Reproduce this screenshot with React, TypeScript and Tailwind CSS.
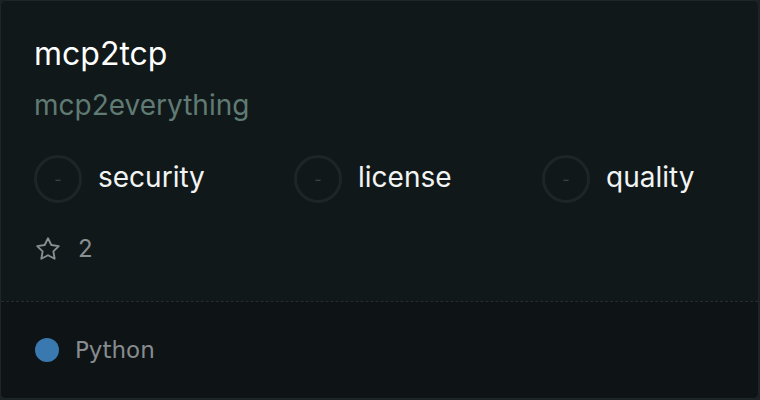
import React from 'react';

const SCORES = [
  { label: 'security', w: 'w-[260px]' },
  { label: 'license', w: 'w-[248px]' },
  { label: 'quality', w: 'w-auto' },
];

function ScoreCircle() {
  return (
    <div className="w-12 h-12 rounded-full border-[3px] border-[#1e2527] flex items-center justify-center text-[#3b4244] text-[16px] leading-none">
      -
    </div>
  );
}

export default function App() {
  return (
    <div className="w-[760px] h-[400px] bg-[#1c2325]">
      <div
        className="w-[759px] h-[399px] rounded-[6px] border border-[#1f2628] bg-[#111819] flex flex-col overflow-hidden"
        style={{ fontFamily: 'Inter, "Liberation Sans", sans-serif' }}
      >
        <div className="flex-1 pl-[33px] pt-[33px]">
          <h1 className="text-[32px] leading-[40px] text-white">mcp2tcp</h1>
          <p className="mt-[13px] text-[28px] leading-[36px] text-[#5f7b74]">mcp2everything</p>
          <div className="mt-[32px] flex items-center">
            {SCORES.map((s) => (
              <div key={s.label} className={`flex items-center gap-4 ${s.w}`}>
                <ScoreCircle />
                <span className="pb-[4px] text-[28px] leading-none text-[#f2f4f4]">{s.label}</span>
              </div>
            ))}
          </div>
          <div className="mt-[32px] flex items-center gap-[16px] text-[#8a9092]">
            <svg width="28" height="28" viewBox="0 0 24 24" fill="none" stroke="currentColor" strokeWidth="1.6" strokeLinejoin="round">
              <path d="M12 2.8l2.85 5.78 6.38.93-4.62 4.5 1.09 6.35L12 17.36l-5.7 3 1.09-6.35-4.62-4.5 6.38-.93z" />
            </svg>
            <span className="text-[24px] leading-none">2</span>
          </div>
        </div>
        <div className="h-[97px] border-t border-dashed border-[#262d30] bg-[#0e1316] flex items-center pl-[34px] gap-[16px]">
          <span className="w-6 h-6 rounded-full bg-[#3a78b0]" />
          <span
            className="text-[23px] text-[#878c8e]"
            style={{ fontFamily: '"DejaVu Sans", sans-serif' }}
          >
            Python
          </span>
        </div>
      </div>
    </div>
  );
}
